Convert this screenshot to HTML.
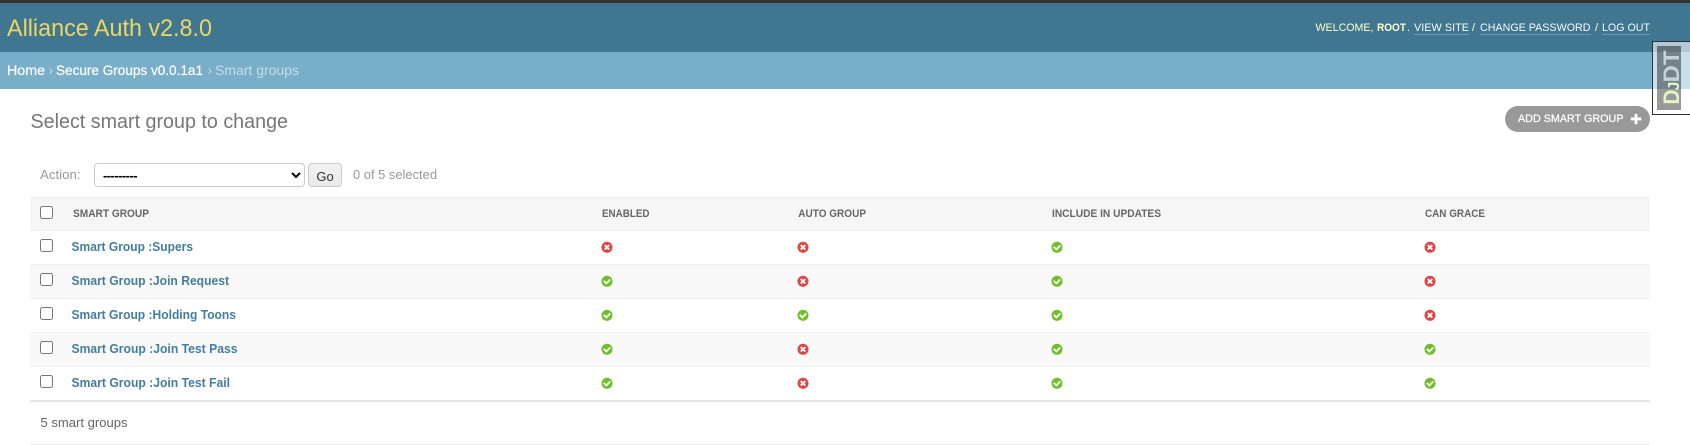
<!DOCTYPE html>
<html lang="en"><head><meta charset="utf-8"><title>Select smart group to change</title>
<style>
html,body{margin:0;padding:0;width:1690px;height:445px;overflow:hidden;background:#fff}
body{position:relative;font-family:"Liberation Sans",sans-serif}
svg{position:absolute;left:0;top:0}
svg text{font-family:"Liberation Sans",sans-serif}
input[type=checkbox]{position:absolute;margin:0;width:13px;height:13px;left:40px}
select{position:absolute;left:94px;top:163px;width:211px;height:24px;box-sizing:border-box;border:1px solid #ccc;border-radius:4px;background:#fff;padding:0 4px;margin:0;font:bold 13px "Liberation Sans",sans-serif;letter-spacing:-.55px;color:#000}
.go{position:absolute;left:308px;top:163px;width:34px;height:24px;box-sizing:border-box;border:1px solid #ccc;border-radius:4px;background:linear-gradient(#f3f3f3,#e9e9e9);color:#333;font-size:13px;line-height:25px;text-align:center}
</style></head><body>
<svg width="1690" height="445" viewBox="0 0 1690 445" xmlns="http://www.w3.org/2000/svg">
<defs>
<g id="y"><path fill="#70bf2b" transform="translate(.55 .55) scale(.0072)" d="M1412 734q0-28-18-46l-91-90q-19-19-45-19t-45 19l-408 407-226-226q-19-19-45-19t-45 19l-91 90q-18 18-18 46 0 27 18 45l362 362q19 19 45 19 27 0 46-19l543-543q18-18 18-45zm252 162q0 209-103 385.500t-279.500 279.500-385.500 103-385.500-103-279.500-279.500-103-385.500 103-385.500 279.500-279.500 385.500-103 385.500 103 279.500 279.500 103 385.500z"/></g>
<g id="n"><path fill="#dd4646" transform="translate(.55 .55) scale(.0072)" d="M1277 1122q0-26-19-45l-181-181 181-181q19-19 19-45 0-27-19-46l-90-90q-19-19-46-19-26 0-45 19l-181 181-181-181q-19-19-45-19-27 0-46 19l-90 90q-19 19-19 46 0 26 19 45l181 181-181 181q-19 19-19 45 0 27 19 46l90 90q19 19 46 19 26 0 45-19l181-181 181 181q19 19 45 19 27 0 46-19l90-90q19-19 19-46zm387-226q0 209-103 385.500t-279.500 279.500-385.500 103-385.500-103-279.500-279.500-103-385.500 103-385.500 279.500-279.500 385.500-103 385.500 103 279.500 279.500 103 385.500z"/></g>
</defs>
<rect width="1690" height="3" fill="#333"/>
<rect y="3" width="1690" height="49" fill="#417690"/>
<rect y="52" width="1690" height="37" fill="#79aec8"/>
<text x="7" y="36" font-size="24" fill="#ecd764" textLength="205" lengthAdjust="spacingAndGlyphs">Alliance Auth v2.8.0</text>
<g font-size="11" fill="#ffc">
<text x="1315.500" y="31" textLength="58" lengthAdjust="spacingAndGlyphs">WELCOME,</text>
<text x="1377" y="31" font-weight="bold" textLength="29" lengthAdjust="spacingAndGlyphs">ROOT</text>
<text x="1407" y="31">.</text>
<text x="1472" y="31">/</text>
<text x="1595" y="31">/</text>
</g>
<g font-size="11" fill="#f4fbfb">
<text x="1414" y="31" textLength="55" lengthAdjust="spacingAndGlyphs">VIEW SITE</text>
<text x="1480" y="31" textLength="110.500" lengthAdjust="spacingAndGlyphs">CHANGE PASSWORD</text>
<text x="1602" y="31" textLength="48" lengthAdjust="spacingAndGlyphs">LOG OUT</text>
</g>
<g fill="#fff" fill-opacity=".25">
<rect x="1414" y="34" width="55" height="1"/><rect x="1480" y="34" width="111" height="1"/><rect x="1602" y="34" width="48" height="1"/>
</g>
<g font-size="14">
<text x="7" y="75" fill="#fff" stroke="#fff" stroke-width=".2" textLength="38" lengthAdjust="spacingAndGlyphs">Home</text>
<text x="48.500" y="75" fill="#c4dce8">›</text>
<text x="56" y="75" fill="#fff" stroke="#fff" stroke-width=".2" textLength="147" lengthAdjust="spacingAndGlyphs">Secure Groups v0.0.1a1</text>
<text x="207.500" y="75" fill="#c4dce8">›</text>
<text x="215" y="75" fill="#c4dce8" textLength="84" lengthAdjust="spacingAndGlyphs">Smart groups</text>
</g>
<text x="30.500" y="128" font-size="20" fill="#777" textLength="257.500" lengthAdjust="spacingAndGlyphs">Select smart group to change</text>
<rect x="1505" y="106" width="145" height="26" rx="13" fill="#999"/>
<text x="1518" y="122" font-size="11" fill="#fff" stroke="#fff" stroke-width=".25" textLength="105.500" lengthAdjust="spacingAndGlyphs">ADD SMART GROUP</text>
<path fill="#fff" transform="translate(1629.300,112.300) scale(.0075)" d="M1600 796v192q0 40-28 68t-68 28h-416v416q0 40-28 68t-68 28h-192q-40 0-68-28t-28-68v-416h-416q-40 0-68-28t-28-68v-192q0-40 28-68t68-28h416v-416q0-40 28-68t68-28h192q40 0 68 28t28 68v416h416q40 0 68 28t28 68z"/>
<text x="40" y="179" font-size="13" fill="#999" textLength="40.500" lengthAdjust="spacingAndGlyphs">Action:</text>
<text x="353" y="179" font-size="13" fill="#999" textLength="84" lengthAdjust="spacingAndGlyphs">0 of 5 selected</text>
<rect x="30" y="197" width="1620" height="33" fill="#f6f6f6"/>
<rect x="30" y="197" width="1620" height="1" fill="#eee"/>
<rect x="30" y="230" width="1620" height="1" fill="#eee"/>
<rect x="30" y="265" width="1620" height="33" fill="#f9f9f9"/>
<rect x="30" y="333" width="1620" height="33" fill="#f9f9f9"/>
<rect x="30" y="264" width="1620" height="1" fill="#eee"/>
<rect x="30" y="298" width="1620" height="1" fill="#eee"/>
<rect x="30" y="332" width="1620" height="1" fill="#eee"/>
<rect x="30" y="366" width="1620" height="1" fill="#eee"/>
<rect x="30" y="400" width="1620" height="2" fill="#e4e4e4"/>
<rect x="30" y="444" width="1620" height="1" fill="#eee"/>
<g font-size="11" font-weight="bold" fill="#666">
<text x="73" y="217" textLength="76" lengthAdjust="spacingAndGlyphs">SMART GROUP</text>
<text x="602" y="217" textLength="47.500" lengthAdjust="spacingAndGlyphs">ENABLED</text>
<text x="798.300" y="217" textLength="67.700" lengthAdjust="spacingAndGlyphs">AUTO GROUP</text>
<text x="1052" y="217" textLength="109" lengthAdjust="spacingAndGlyphs">INCLUDE IN UPDATES</text>
<text x="1425" y="217" textLength="60" lengthAdjust="spacingAndGlyphs">CAN GRACE</text>
</g>
<g font-size="13" font-weight="bold" fill="#447e9b">
<text x="71.500" y="251" textLength="121.500" lengthAdjust="spacingAndGlyphs">Smart Group :Supers</text>
<text x="71.500" y="285" textLength="157.500" lengthAdjust="spacingAndGlyphs">Smart Group :Join Request</text>
<text x="71.500" y="319" textLength="164.500" lengthAdjust="spacingAndGlyphs">Smart Group :Holding Toons</text>
<text x="71.500" y="353" textLength="166" lengthAdjust="spacingAndGlyphs">Smart Group :Join Test Pass</text>
<text x="71.500" y="387" textLength="158.500" lengthAdjust="spacingAndGlyphs">Smart Group :Join Test Fail</text>
</g>
<text x="40.500" y="427" font-size="13" fill="#666" textLength="87" lengthAdjust="spacingAndGlyphs">5 smart groups</text>
<use href="#n" x="600" y="240.300"/><use href="#n" x="796" y="240.300"/><use href="#y" x="1050" y="240.300"/><use href="#n" x="1423" y="240.300"/>
<use href="#y" x="600" y="274.300"/><use href="#n" x="796" y="274.300"/><use href="#y" x="1050" y="274.300"/><use href="#n" x="1423" y="274.300"/>
<use href="#y" x="600" y="308.300"/><use href="#y" x="796" y="308.300"/><use href="#y" x="1050" y="308.300"/><use href="#n" x="1423" y="308.300"/>
<use href="#y" x="600" y="342.300"/><use href="#n" x="796" y="342.300"/><use href="#y" x="1050" y="342.300"/><use href="#y" x="1423" y="342.300"/>
<use href="#y" x="600" y="376.300"/><use href="#n" x="796" y="376.300"/><use href="#y" x="1050" y="376.300"/><use href="#y" x="1423" y="376.300"/>
<path d="M1690 41.500H1652.500V114.500H1690" fill="none" stroke="#333"/>
<path d="M1653 42H1690V114H1653Z M1657 46V110H1681V46Z" fill="#fff" fill-opacity=".6" fill-rule="evenodd"/>
<rect x="1657" y="46" width="24" height="64" fill="#727272" fill-opacity=".72"/>
<g transform="translate(1679,104.500) rotate(-90)" font-weight="bold">
<text x="0" y="0" font-size="22" fill="#e2f7c4" textLength="15" lengthAdjust="spacingAndGlyphs">D</text>
<text x="14" y="0" font-size="16" fill="#e2f7c4">J</text>
<text x="22" y="0" font-size="22" fill="#c8d2d6" textLength="32" lengthAdjust="spacingAndGlyphs">DT</text>
</g>
</svg>
<select><option>---------</option></select>
<div class="go">Go</div>
<input type="checkbox" style="top:206px">
<input type="checkbox" style="top:239px">
<input type="checkbox" style="top:273px">
<input type="checkbox" style="top:307px">
<input type="checkbox" style="top:341px">
<input type="checkbox" style="top:375px">
</body></html>
